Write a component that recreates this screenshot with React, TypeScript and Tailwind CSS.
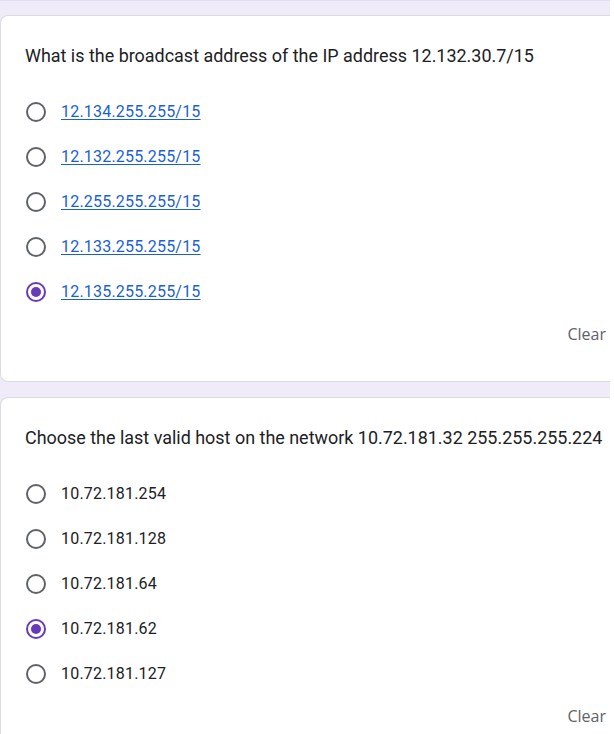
import React from "react";

type Opt = { label: string; selected?: boolean };

function Radio({ selected }: { selected?: boolean }) {
  return selected ? (
    <div className="w-[20px] h-[20px] rounded-full border-2 border-[#673ab7] flex items-center justify-center shrink-0">
      <div className="w-[10px] h-[10px] rounded-full bg-[#673ab7]" />
    </div>
  ) : (
    <div className="w-[20px] h-[20px] rounded-full border-2 border-[#5f6368] shrink-0" />
  );
}

function Card({
  question,
  options,
  link,
}: {
  question: string;
  options: Opt[];
  link?: boolean;
}) {
  return (
    <div className="bg-white rounded-l-[8px] border-y border-l border-[#dadce0] pl-[24px] pr-[4px] pt-[28px] pb-[37px]">
      <div className="text-[17.95px] leading-[24px] text-[#202124]">{question}</div>
      <div className="mt-[21px] flex flex-col">
        {options.map((o) => (
          <div key={o.label} className="h-[45px] flex items-center">
            <div className="pl-[1px]">
              <Radio selected={o.selected} />
            </div>
            <span
              className={
                "ml-[15px] text-[16px] leading-[20px] tracking-[0.2px] " +
                (link ? "text-[#1a5fd3] underline underline-offset-[2px]" : "text-[#202124]")
              }
            >
              {o.label}
            </span>
          </div>
        ))}
      </div>
      <div className="flex justify-end mt-[10px]">
        <span className="text-[16px] leading-[20px] text-[#5f6368] font-medium" style={{ fontFamily: '"Open Sans", sans-serif' }}>
          Clear
        </span>
      </div>
    </div>
  );
}

export default function App() {
  return (
    <div className="w-[614px] h-[734px] bg-white overflow-hidden" style={{ fontFamily: 'Roboto, "Liberation Sans", sans-serif' }}>
      <div className="w-[610px] bg-[#f0ebf8] pt-[14px] border-t border-[#e4dff0] flex flex-col gap-[15px]">
        <Card
          question="What is the broadcast address of the IP address 12.132.30.7/15"
          link
          options={[
            { label: "12.134.255.255/15" },
            { label: "12.132.255.255/15" },
            { label: "12.255.255.255/15" },
            { label: "12.133.255.255/15" },
            { label: "12.135.255.255/15", selected: true },
          ]}
        />
        <Card
          question="Choose the last valid host on the network 10.72.181.32 255.255.255.224"
          options={[
            { label: "10.72.181.254" },
            { label: "10.72.181.128" },
            { label: "10.72.181.64" },
            { label: "10.72.181.62", selected: true },
            { label: "10.72.181.127" },
          ]}
        />
      </div>
    </div>
  );
}
